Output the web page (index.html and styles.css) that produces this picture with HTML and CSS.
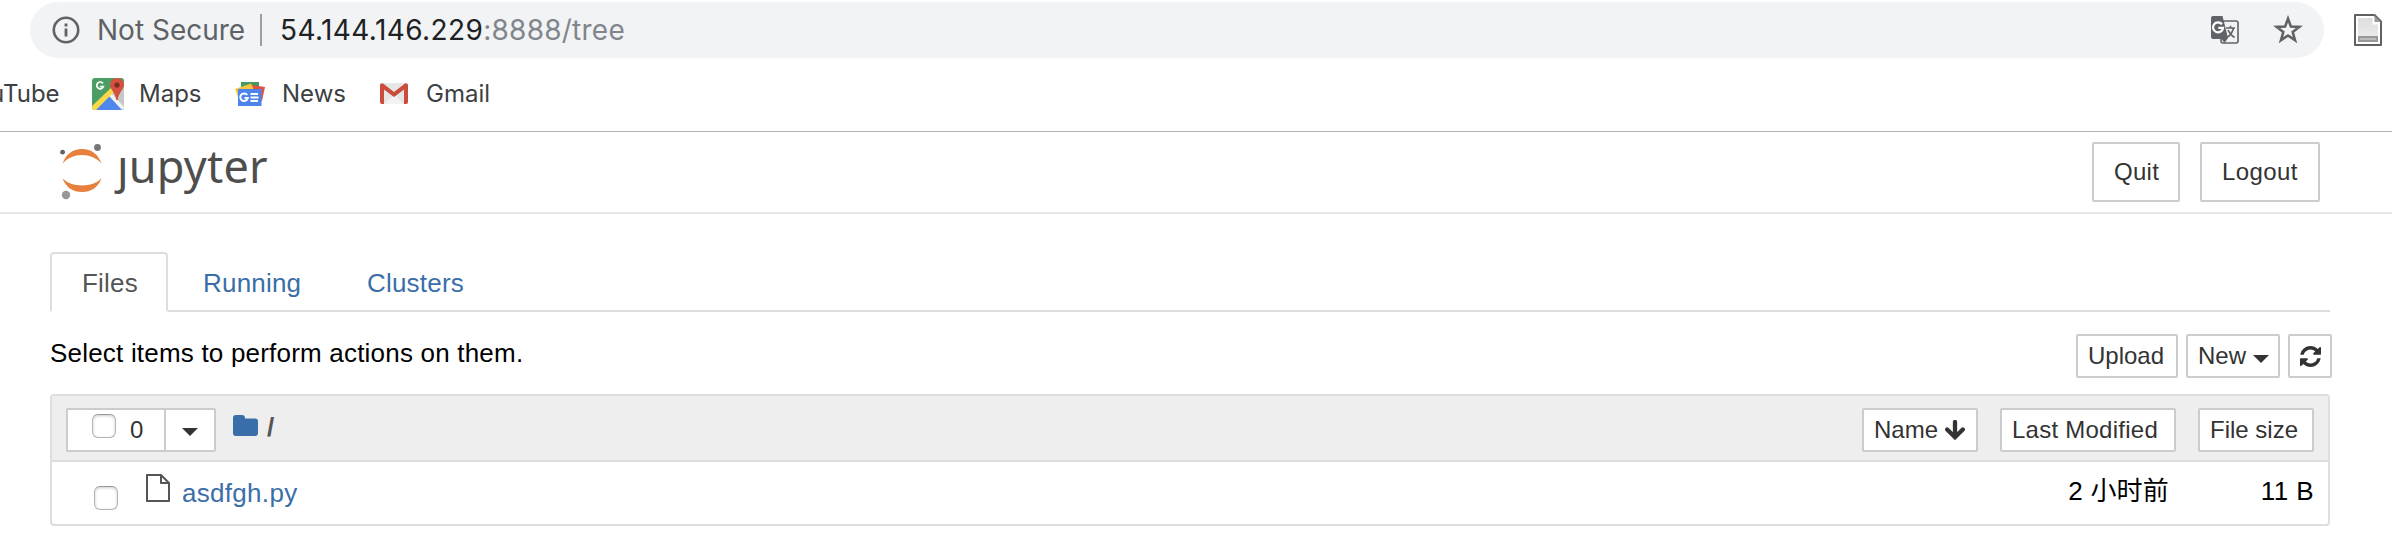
FILE: index.html
```html
<!DOCTYPE html>
<html lang="en">
<head>
<meta charset="utf-8">
<title>Home Page - jupyter</title>
<link rel="stylesheet" href="styles.css">
</head>
<body>
<div class="toolbar">
  <div class="omnibox">
    <svg class="info" viewBox="0 0 28 28"><circle cx="14" cy="14" r="12.2" fill="none" stroke="#5f6368" stroke-width="2.6"/><path d="M12.6 7.5h2.8v2.9h-2.8zM12.6 12.6h2.8v8h-2.8z" fill="#5f6368"/></svg>
    <span class="secure">Not Secure</span>
    <span class="split"></span>
    <span class="url"><span class="host">54.144.146.229</span><span class="path">:8888/tree</span></span>
    <svg class="translate" viewBox="0 0 28 28"><rect x="10" y="5" width="17" height="22" rx="2" fill="#f1f3f4" stroke="#5f6368" stroke-width="1.6"/><path d="M15 12h9M19.500 9.800V12M22.500 12c-.8 4-3.500 7.500-6.500 9.500M17 14c1.200 3 3.500 5.500 6.500 7.500" fill="none" stroke="#5f6368" stroke-width="1.600"/><path d="M2 0h9.500l5.500 22-3.500 5-3-4H2a2 2 0 0 1-2-2V2a2 2 0 0 1 2-2z" fill="#5f6368"/><path d="M11 8.300A5 5 0 1 0 12 11.800H7.300" fill="none" stroke="#fff" stroke-width="2.300"/></svg>
    <svg class="star" viewBox="0 0 30 30"><path d="M15 3.700l2.900 7.900 8.400.300-6.600 5.200 2.300 8.100-7-4.700-7 4.700 2.300-8.100-6.600-5.200 8.400-.300z" fill="none" stroke="#5f6368" stroke-width="2.600"/></svg>
  </div>
  <svg class="ext" viewBox="0 0 28 32"><defs><linearGradient id="pg" x1="0" y1="0" x2="0" y2="1"><stop offset="0" stop-color="#ddd"/><stop offset="1" stop-color="#eee"/></linearGradient></defs><path d="M1 1h19.500L27 7.500V31H1z" fill="#fff" stroke="#606060" stroke-width="2" stroke-linejoin="round"/><path d="M4 4h15v6h5v18H4z" fill="url(#pg)"/><path d="M20 1l7 7h-7z" fill="#999"/><path d="M19.500 3v6.500H25" fill="none" stroke="#fff" stroke-width="2"/><path d="M5 23h18v4H5z" fill="#bbb" stroke="#999" stroke-width="2"/></svg>
</div>
<div class="bookmarks">
  <span class="b0">uTube</span>
  <svg class="maps" viewBox="0 0 32 32"><clipPath id="mc"><rect width="32" height="32" rx="3"/></clipPath><g clip-path="url(#mc)"><path d="M0 0h32v32H0z" fill="#4b9d64"/><path d="M32 8v24L17 17z" fill="#c8c8c8"/><path d="M17 15l15 15v2H4z" fill="#4f87ee"/><path d="M16 17l3-2 13 14v3h-2z" fill="#f3f3f3"/><path d="M0 28L20 9l2 5L4 32H0z" fill="#f8d849"/></g><path d="M11 5.500A3.400 3.400 0 1 0 11.400 8.500H8" fill="none" stroke="#fff" stroke-width="1.700"/><path d="M25 0a7 7 0 0 1 7 7c0 4.500-5.400 7-6.300 15h-1.400C23.400 14 18 11.500 18 7a7 7 0 0 1 7-7z" fill="#d5513f"/><circle cx="25" cy="7" r="2.600" fill="#7c2b20"/></svg>
  <span class="b1">Maps</span>
  <svg class="news" viewBox="0 0 30 24"><path d="M6 0h18v12H6z" fill="#459a5f"/><path d="M17 3l13 2-3 14H15z" fill="#e15343"/><path d="M0 7l16-5.500L22 15 5 20z" fill="#f5c543"/><path d="M3 7h23.500v17H3z" fill="#4c84ec"/><path d="M12.200 13A3.800 3.800 0 1 0 12.800 16H9.500" fill="none" stroke="#fff" stroke-width="2"/><path d="M15.500 12h7.500M15.500 15.500h8M15.500 19h7.500" stroke="#fff" stroke-width="2"/></svg>
  <span class="b2">News</span>
  <svg class="gmail" viewBox="0 0 28 21"><rect width="28" height="21" rx="2" fill="#e6e6e6"/><path d="M4 21l10-9 10 9z" fill="#f3f3f3"/><path d="M0 2a2 2 0 0 1 3-1.500L14 9 25 .500A2 2 0 0 1 28 2v17a2 2 0 0 1-2 2h-2V6.500L14 14 4 6.500V21H2a2 2 0 0 1-2-2z" fill="#cb4b3d"/></svg>
  <span class="b3">Gmail</span>
</div>
<header class="header">
  <div class="logo">
    <svg class="mark" viewBox="0 0 44 58"><path d="M2.500 20.500Q8 6 22 6T41.500 20.500Q34 12 22 12T2.500 20.500zM2.500 35.500Q10 42.500 22 42.500T41.500 35.500Q36 49 22 49T2.500 35.500z" fill="#e6803c"/><circle cx="37.500" cy="4.500" r="3.400" fill="#767677"/><circle cx="2.600" cy="9.200" r="2.400" fill="#616161"/><circle cx="6" cy="52" r="4.200" fill="#989798"/></svg>
    <span class="word"><span class="j">j</span>upyter</span>
  </div>
  <div class="actions"><button class="btn quit">Quit</button><button class="btn logout">Logout</button></div>
</header>
<main class="main">
  <nav class="tabs"><a class="tab active">Files</a><a class="tab running">Running</a><a class="tab clusters">Clusters</a></nav>
  <div class="tools">
    <span class="hint">Select items to perform actions on them.</span>
    <div class="group">
      <button class="btn small upload">Upload</button>
      <button class="btn small new">New<i class="caret"></i></button>
      <button class="btn small refresh"><svg viewBox="0 0 1536 1536"><path d="M1511 928q0 5-1 7-64 268-268 434.500T764 1536q-146 0-282.500-55T238 1324l-129 129q-19 19-45 19t-45-19-19-45V960q0-26 19-45t45-19h448q26 0 45 19t19 45-19 45l-137 137q71 66 161 102t187 36q134 0 250-65t186-179q11-17 53-117 8-23 30-23h192q13 0 22.500 9.500t9.500 22.500zm25-800v448q0 26-19 45t-45 19h-448q-26 0-45-19t-19-45 19-45l138-138Q969 256 768 256q-134 0-250 65T332 500q-11 17-53 117-8 23-30 23H50q-13 0-22.500-9.500T18 608v-7q65-268 270-434.500T768 0q146 0 284 55.500T1297 212l130-129q19-19 45-19t45 19 19 45z"/></svg></button>
    </div>
  </div>
  <section class="list">
    <div class="list-head">
      <div class="select"><span class="all"><i class="check"></i><span class="count">0</span></span><span class="drop"><i class="caret"></i></span></div>
      <svg class="folder" viewBox="0 0 25 21"><path d="M3 0h6a3 3 0 0 1 3 3v.500h10a3 3 0 0 1 3 3V18a3 3 0 0 1-3 3H3a3 3 0 0 1-3-3V3a3 3 0 0 1 3-3z"/></svg>
      <span class="slash">/</span>
      <div class="sorts">
        <button class="btn small name">Name<svg viewBox="0 0 20 20"><path d="M10 2v14M2.200 9.500L10 17.200l7.800-7.700" fill="none" stroke="#333" stroke-width="4.300" stroke-linecap="round"/></svg></button>
        <button class="btn small modified">Last Modified</button>
        <button class="btn small size">File size</button>
      </div>
    </div>
    <div class="row">
      <i class="check"></i>
      <svg class="file" viewBox="0 0 24 28"><path d="M1 1h14l8 8v18H1zM15 1v8h8" fill="none" stroke="#555" stroke-width="2" stroke-linejoin="round"/></svg>
      <a class="fname">asdfgh.py</a>
      <span class="when">2 小时前</span>
      <span class="bytes">11 B</span>
    </div>
  </section>
</main>
</body>
</html>
```
FILE: styles.css
```css
* { box-sizing: border-box; }
body { margin: 0; width: 2392px; height: 548px; overflow: hidden; background: #fff; color: #000; font-family: "Liberation Sans", "Noto Sans CJK SC", sans-serif; font-size: 26px; }
svg { display: block; flex: none; }
span, a { white-space: nowrap; }

.toolbar { display: flex; height: 60px; padding: 2px 0 0 30px; }
.omnibox { display: flex; align-items: center; width: 2294px; height: 56px; padding-left: 22px; border-radius: 28px; background: #f1f3f4; font-family: Inter, sans-serif; font-size: 28px; }
.info { width: 28px; height: 28px; }
.secure { width: 162px; margin-left: 17px; color: #5f6368; }
.split { width: 2px; height: 32px; margin-left: 1px; background: #9aa0a6; }
.url { flex: 1; margin-left: 18px; }
.host { color: #202124; letter-spacing: 0.4px; }
.path { color: #80868b; letter-spacing: 0.25px; }
.translate { width: 28px; height: 28px; margin-right: 34px; }
.star { width: 30px; height: 30px; margin-right: 21px; }
.ext { width: 28px; height: 32px; margin: 12px 0 0 30px; }

.bookmarks { display: flex; align-items: center; height: 71px; padding-bottom: 4px; color: #3c4043; font-family: Inter, sans-serif; font-size: 24px; }
.b0 { width: 102px; margin-left: -10px; }
.maps { width: 32px; height: 32px; }
.b1 { width: 96px; margin-left: 15px; }
.news { width: 30px; height: 24px; }
.b2 { width: 98px; margin-left: 17px; }
.gmail { width: 28px; height: 21px; }
.b3 { margin-left: 18px; }

.header { display: flex; justify-content: space-between; height: 83px; padding: 10px 72px 0 60px; border-top: 1px solid #b0b0b0; border-bottom: 2px solid #e7e7e7; }
.logo { display: flex; }
.mark { width: 44px; height: 58px; margin-top: 1px; }
.word { margin-left: 13px; color: #4e4e4e; font-family: "Noto Sans", sans-serif; font-size: 45px; line-height: 58px; margin-top: -5px; letter-spacing: 0.2px; }
/* the logotype's j has no dot */
.j { display: inline-block; clip-path: inset(21px -10px -10px -10px); }
.actions { display: flex; gap: 20px; }
.btn { display: flex; align-items: center; margin: 0; padding: 0; border: 2px solid #ccc; border-radius: 2px; background: #fff; color: #333; font-family: inherit; font-size: 24px; }
.quit { width: 88px; height: 60px; padding-left: 20px; letter-spacing: 0.3px; }
.logout { width: 120px; height: 60px; padding-left: 20px; letter-spacing: 0.4px; }

.main { padding: 38px 62px 0 50px; letter-spacing: 0.2px; }
.tabs { display: flex; height: 60px; border-bottom: 2px solid #ddd; }
.tab { height: 60px; padding-left: 35px; color: #3a6ea8; line-height: 62px; }
.active { width: 118px; padding-left: 30px; border: 2px solid #ddd; border-bottom-color: #fff; border-radius: 4px 4px 0 0; color: #555; line-height: 58px; }
.running { width: 164px; }
.tools { display: flex; justify-content: space-between; height: 82px; padding-top: 22px; margin-right: -2px; }
.hint { line-height: 38px; }
.group { display: flex; gap: 8px; }
.small { height: 44px; padding-left: 10px; }
.upload { width: 102px; }
.new { width: 94px; }
.refresh { width: 44px; }
.refresh svg { width: 21px; height: 21px; fill: #333; }
.caret { width: 16px; border: 8px solid transparent; border-top-color: #333; border-bottom: 0; }
.new .caret { margin: 5px 0 0 7px; }

.list { border: 2px solid #ddd; border-radius: 4px; }
.list-head { display: flex; height: 66px; padding: 12px 14px 0; background: #eee; border-bottom: 2px solid #ddd; }
.select { display: flex; width: 150px; height: 44px; border: 2px solid #ccc; border-radius: 2px; background: #fff; color: #333; font-size: 24px; }
.all { display: flex; width: 98px; padding: 4px 0 0 24px; border-right: 2px solid #ccc; line-height: 32px; }
.count { margin-left: 14px; }
.check { flex: none; width: 24px; height: 24px; border: 1.500px solid #b4b4b4; border-top-color: #999; border-radius: 6px; background: #fff; box-shadow: inset 0 1px 3px #ccc; }
.drop { padding: 18px 0 0 16px; }
.drop .caret { display: block; }
.folder { width: 25px; height: 21px; margin: 7px 0 0 17px; fill: #3a6ea8; }
.slash { margin-left: 9px; color: #555; font-weight: bold; line-height: 39px; }
.sorts { display: flex; gap: 22px; margin-left: auto; }
.name { width: 116px; }
.name svg { width: 20px; height: 20px; margin-left: 7px; }
.modified { width: 176px; letter-spacing: 0.25px; }
.size { width: 116px; }
.row { display: flex; height: 62px; padding: 0 14px 0 42px; line-height: 58px; }
.row .check { margin-top: 24px; }
.file { width: 24px; height: 28px; margin: 12px 0 0 28px; }
.fname { margin-left: 12px; color: #3a6ea8; line-height: 62px; letter-spacing: 0.3px; }
.when { margin-left: auto; }
.bytes { width: 145px; text-align: right; letter-spacing: 0.4px; }
```
